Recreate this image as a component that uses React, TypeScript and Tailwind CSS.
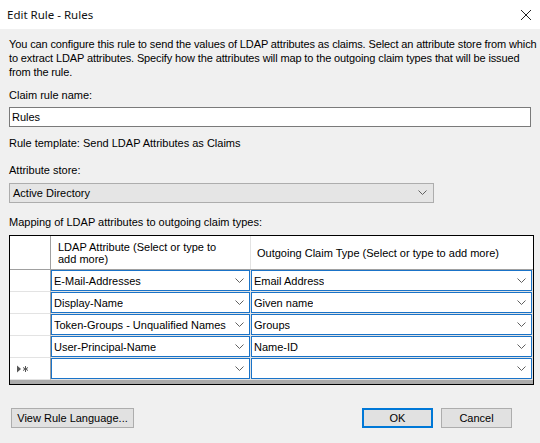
import React from "react";

const Chevron = () => (
  <svg width="9" height="6" viewBox="0 0 9 6" className="shrink-0">
    <polyline points="0.5,0.5 4.5,4.5 8.5,0.5" fill="none" stroke="#606060" strokeWidth="1" />
  </svg>
);

const rows: [string, string][] = [
  ["E-Mail-Addresses", "Email Address"],
  ["Display-Name", "Given name"],
  ["Token-Groups - Unqualified Names", "Groups"],
  ["User-Principal-Name", "Name-ID"],
  ["", ""],
];

function Cell({ text, w }: { text: string; w: string }) {
  return (
    <div className={`${w} h-full border-r border-b border-[#e3e3e3] bg-white`}>
      <div className="h-[21px] border-[1.5px] border-[#1a73c8] flex items-center pl-[2px] pr-[5px] justify-between">
        <span className="truncate">{text}</span>
        <Chevron />
      </div>
    </div>
  );
}

export default function App() {
  return (
    <div className="w-[540px] h-[443px] bg-[#f0f0f0] font-['Liberation_Sans',Arial,sans-serif] text-[11px] leading-[14px] text-black overflow-hidden">
      <div className="h-[29px] bg-white flex items-center justify-between pl-[7px] pr-[8px]">
        <span className="font-['Noto_Sans',sans-serif] text-[11.5px] text-[#111]">Edit Rule - Rules</span>
        <svg width="12" height="12" viewBox="0 0 12 12">
          <path d="M1 1 L11 11 M11 1 L1 11" stroke="#222" strokeWidth="1" />
        </svg>
      </div>
      <div className="px-[9px] pt-[8px]">
        <p className="whitespace-nowrap tracking-[-0.12px]">
          You can configure this rule to send the values of LDAP attributes as claims. Select an attribute store from which
          <br />
          to extract LDAP attributes. Specify how the attributes will map to the outgoing claim types that will be issued
          <br />
          from the rule.
        </p>
        <div className="mt-[9px]">Claim rule name:</div>
        <div className="mt-[5px] h-[20px] border border-[#7a7a7a] bg-white flex items-center pl-[2px]">Rules</div>
        <div className="mt-[9px]">Rule template: Send LDAP Attributes as Claims</div>
        <div className="mt-[13px]">Attribute store:</div>
        <div className="mt-[6px] h-[20px] w-[425px] border border-[#adadad] bg-[#e5e5e5] flex items-center justify-between pl-[3px] pr-[6px]">
          <span>Active Directory</span>
          <Chevron />
        </div>
        <div className="mt-[12px]">Mapping of LDAP attributes to outgoing claim types:</div>
        <div className="mt-[6px] w-[525px] h-[150px] border border-black bg-[#ababab] flex flex-col leading-[12px]">
          <div className="h-[34px] flex bg-white border-b border-[#a0a0a0] shrink-0">
            <div className="w-[41px] border-r border-[#a0a0a0]" />
            <div className="w-[200px] border-r border-[#e3e3e3] flex items-center pl-[7px]">
              LDAP Attribute (Select or type to
              <br />
              add more)
            </div>
            <div className="w-[282px] flex items-center pl-[6px]">
              Outgoing Claim Type (Select or type to add more)
            </div>
          </div>
          {rows.map((r, i) => (
            <div key={i} className="h-[22px] flex shrink-0">
              <div className="w-[41px] h-full bg-white border-r border-b border-[#a0a0a0] border-b-[#e3e3e3] flex items-center pl-[7px]">
                {i === rows.length - 1 && (
                  <svg width="12" height="8" viewBox="0 0 12 8">
                    <polygon points="0,0.5 4,4 0,7.5" fill="#555" />
                    <path d="M8.5 1 V7 M6 2.5 L11 5.5 M11 2.5 L6 5.5" stroke="#555" strokeWidth="1" />
                  </svg>
                )}
              </div>
              <Cell text={r[0]} w="w-[200px]" />
              <Cell text={r[1]} w="w-[282px]" />
            </div>
          ))}
        </div>
        <div className="mt-[23px] flex justify-between items-center pl-[2px] pr-[19px]">
          <button className="h-[20px] w-[123px] border border-[#adadad] bg-[#e1e1e1] text-[11px]">View Rule Language...</button>
          <div className="flex gap-[8px]">
            <button className="h-[20px] w-[71px] border-2 border-[#0078d7] bg-[#e1e1e1] text-[11px]">OK</button>
            <button className="h-[20px] w-[71px] border border-[#adadad] bg-[#e1e1e1] text-[11px]">Cancel</button>
          </div>
        </div>
      </div>
    </div>
  );
}
